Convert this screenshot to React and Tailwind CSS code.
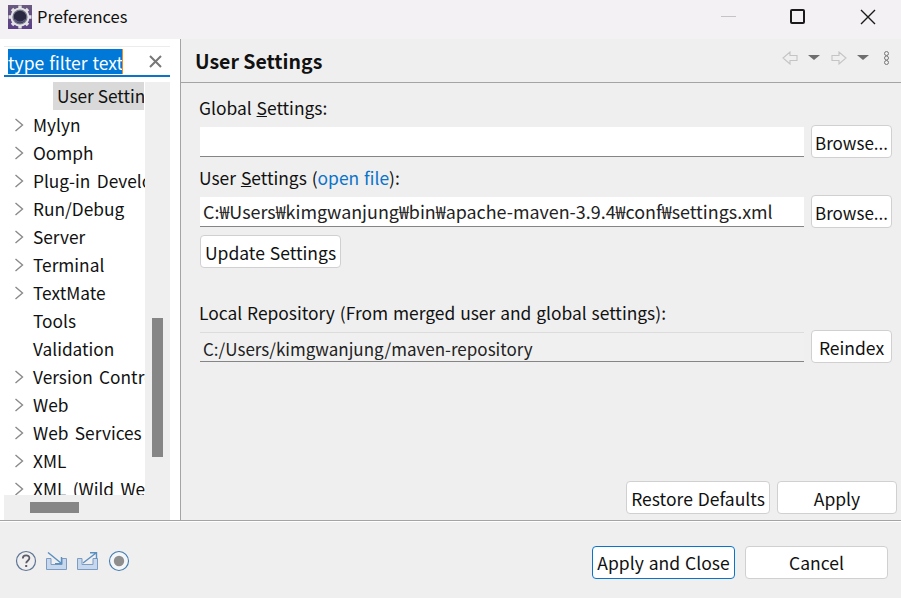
import React from 'react';

const font = { fontFamily: '"Noto Sans CJK KR", "Noto Sans", sans-serif' };

const treeItems = [
  { label: 'Mylyn', arrow: true },
  { label: 'Oomph', arrow: true },
  { label: 'Plug-in Development', arrow: true },
  { label: 'Run/Debug', arrow: true },
  { label: 'Server', arrow: true },
  { label: 'Terminal', arrow: true },
  { label: 'TextMate', arrow: true },
  { label: 'Tools', arrow: false },
  { label: 'Validation', arrow: false },
  { label: 'Version Control', arrow: true },
  { label: 'Web', arrow: true },
  { label: 'Web Services', arrow: true },
  { label: 'XML', arrow: true },
  { label: 'XML (Wild Web Developer)', arrow: true },
];

const Chevron = () => (
  <svg width="10" height="14" viewBox="0 0 10 14" className="shrink-0">
    <path d="M1.5 1 L8.5 7 L1.5 13" fill="none" stroke="#8a8a8a" strokeWidth="1.4" />
  </svg>
);

const Btn = ({ children, className = '' }) => (
  <button className={`h-[33px] shrink-0 bg-white border border-[#d0d0d0] rounded-[4px] text-[17.5px] [word-spacing:1px] leading-none text-[#111] whitespace-nowrap ${className}`}>
    {children}
  </button>
);

const Field = ({ value, disabled, className = '' }) => (
  <div className={`flex-1 h-[30px] mt-[2px] ml-[1px] flex items-center pl-[3px] border-b border-[#858585] whitespace-nowrap overflow-hidden text-[#222] ${disabled ? 'bg-[#f0f0f0] border-t border-t-[#dcdcdc]' : 'bg-white'} ${className}`}>
    {value}
  </div>
);

const AppIcon = () => (
  <svg width="24" height="24" viewBox="0 0 24 24">
    <defs>
      <linearGradient id="appBg" x1="0" y1="0" x2="0" y2="1">
        <stop offset="0" stopColor="#6a5a80" />
        <stop offset="1" stopColor="#5a3f86" />
      </linearGradient>
    </defs>
    <rect width="24" height="24" fill="url(#appBg)" />
    <circle cx="12" cy="12" r="9.5" fill="#e4e4e6" />
    <g stroke="#e4e4e6" strokeWidth="3.4">
      <path d="M12 0.5V23.5M0.5 12H23.5M4 4L20 20M20 4L4 20" />
    </g>
    <circle cx="12" cy="12" r="7.6" fill="#77778a" />
    <circle cx="12" cy="12" r="6.2" fill="#2a2840" />
    <path d="M7 14.5a6 6 0 0 0 10 0" fill="none" stroke="#5c5a88" strokeWidth="1.2" />
  </svg>
);

const HelpIcon = () => (
  <svg width="22" height="22" viewBox="0 0 22 22">
    <circle cx="11" cy="11" r="9.5" fill="none" stroke="#5f7596" strokeWidth="1.2" />
    <path d="M7.8 8.5c0-4.2 6.6-4.2 6.6-.4 0 2.6-3.2 2.6-3.2 5.2" fill="none" stroke="#5a5a6a" strokeWidth="1.8" />
    <rect x="10.2" y="15" width="2" height="2" fill="#5a5a6a" />
  </svg>
);

const TrayIcon = ({ out }) => (
  <svg width="21" height="18" viewBox="0 0 21 18">
    <path d="M0.5 6.5H5V12.5H16V6.5H20.5V17.5H0.5Z" fill="#c8d8ec" stroke="#7d9cc4" strokeWidth="1" />
    {out ? (
      <path d="M6 11L19 1M13 0.7H19.5V7" fill="none" stroke="#5a8fc2" strokeWidth="1.4" />
    ) : (
      <path d="M2 0.5L15.5 11.5M15.5 5V11.7H9" fill="none" stroke="#5a8fc2" strokeWidth="1.4" />
    )}
  </svg>
);

const RecordIcon = () => (
  <svg width="22" height="22" viewBox="0 0 22 22">
    <circle cx="11" cy="11" r="9.5" fill="#f4f6f8" stroke="#3f7ab0" strokeWidth="1.1" />
    <circle cx="11" cy="11" r="5.2" fill="#8e8e8e" />
  </svg>
);

const NavArrow = ({ right }) => (
  <svg width="16" height="14" viewBox="0 0 16 14" className={right ? '' : '-scale-x-100'}>
    <path d="M1 4.5H8V1L15 7L8 13V9.5H1Z" fill="none" stroke="#c4c4c4" strokeWidth="1.1" />
  </svg>
);

const Caret = () => <div className="w-0 h-0 border-x-[6px] border-x-transparent border-t-[5px] border-t-[#6e6e6e]" />;

export default function App() {
  return (
    <div className="w-[901px] h-[598px] flex flex-col bg-[#efefef] overflow-hidden text-[#111]" style={font}>
      {/* title bar */}
      <div className="h-[39px] shrink-0 flex items-center bg-[#f3f1f3] pl-[8px] pb-[6px]">
        <AppIcon />
        <span className="ml-[5px] text-[16.5px] text-[#111]">Preferences</span>
        <div className="ml-auto flex items-center">
          <div className="w-[15px] h-px bg-[#c4c4c4] mr-[54px]" />
          <div className="w-[15px] h-[15px] border-2 border-[#1a1a1a] rounded-[2px] mr-[55px]" />
          <svg width="16" height="16" viewBox="0 0 16 16" className="mr-[25px]">
            <path d="M1 1L15 15M15 1L1 15" stroke="#1a1a1a" strokeWidth="1.4" />
          </svg>
        </div>
      </div>

      <div className="flex h-[482px] shrink-0 border-b border-b-[#a4a4a4]">
        {/* left panel */}
        <div className="w-[180px] shrink-0 bg-white pl-[4px] pr-[10px] pt-[7px] flex flex-col">
          <div className="h-[31px] shrink-0 flex items-center border-t border-[#ececec] border-b-2 border-b-[#0a74c8]">
            <span className="ml-[4px] h-[25px] w-[115px] flex items-center pt-[4px] bg-[#0078d7] text-white text-[17.5px] [word-spacing:1px] leading-none whitespace-nowrap overflow-hidden border-r border-r-[#f08a24]">type filter text</span>
            <svg width="13" height="13" viewBox="0 0 13 13" className="ml-auto mr-[8px]">
              <path d="M1 1L12 12M12 1L1 12" stroke="#777" strokeWidth="2" />
            </svg>
          </div>
          <div className="flex h-[413px] shrink-0 mt-[5px]">
            <div className="w-[141px] shrink-0 flex flex-col overflow-hidden">
              <div className="h-[28px] shrink-0 ml-[49px] mr-px bg-[#d9d9d9] pl-[4px] flex items-center text-[17.3px] leading-none whitespace-nowrap overflow-hidden">User Settings</div>
              {treeItems.map((item) => (
                <div key={item.label} className="h-[28px] shrink-0 flex items-center pt-[2px] text-[17.3px] [word-spacing:2.5px] leading-none whitespace-nowrap">
                  <div className="w-[29px] pl-[10px] shrink-0 flex">{item.arrow && <Chevron />}</div>
                  <span>{item.label}</span>
                </div>
              ))}
            </div>
            <div className="w-[25px] bg-[#efefef] pl-[7px]">
              <div className="w-[11px] h-[139px] mt-[236px] bg-[#868686]" />
            </div>
          </div>
          <div className="h-[25px] bg-[#efefef] shrink-0 pt-[7px] pl-[26px]">
            <div className="w-[49px] h-[11px] bg-[#868686]" />
          </div>
        </div>

        {/* right panel */}
        <div className="flex-1 border-l border-l-[#a4a4a4] flex flex-col">
          <div className="h-[44px] shrink-0 border-b border-b-[#a4a4a4] flex items-center pl-[14px]">
            <span className="font-bold text-[19.5px] pt-[1px]">User Settings</span>
            <div className="ml-auto flex items-center mr-[12px] mt-[-6px]">
              <NavArrow />
              <div className="ml-[10px]"><Caret /></div>
              <div className="ml-[11px]"><NavArrow right /></div>
              <div className="ml-[10px]"><Caret /></div>
              <svg width="5" height="14" viewBox="0 0 5 14" className="ml-[15px]">
                <g fill="none" stroke="#777" strokeWidth="1">
                  <circle cx="2.5" cy="2.5" r="2" />
                  <circle cx="2.5" cy="7" r="2" />
                  <circle cx="2.5" cy="11.5" r="2" />
                </g>
              </svg>
            </div>
          </div>

          <div className="flex-1 flex flex-col pl-[18px] pr-[9px] pt-[13px] text-[17.4px] [word-spacing:1px] leading-none">
            <div className="h-[24px] flex items-center whitespace-pre">Global <u>S</u>ettings:</div>
            <div className="flex gap-[7px] items-start mt-[5px]">
              <Field value="" />
              <Btn className="w-[81px] !text-[17px] pt-[2px]">Browse...</Btn>
            </div>
            <div className="h-[24px] flex items-center mt-[8px] whitespace-pre">User <u>S</u>ettings (<span className="text-[#0b73c9]">open file</span>):</div>
            <div className="flex gap-[7px] items-start mt-[5px]">
              <Field className="text-[17.9px] [word-spacing:0px]" value="C:₩Users₩kimgwanjung₩bin₩apache-maven-3.9.4₩conf₩settings.xml" />
              <Btn className="w-[81px] !text-[17px] pt-[2px]">Browse...</Btn>
            </div>
            <Btn className="w-[141px] mt-[7px] ml-px pt-[2px]">Update Settings</Btn>
            <div className="h-[24px] flex items-center mt-[33px]">Local Repository (From merged user and global settings):</div>
            <div className="flex gap-[7px] items-start mt-[5px]">
              <Field disabled className="text-[17px] pt-[2px]" value="C:/Users/kimgwanjung/maven-repository" />
              <Btn className="w-[81px] pt-[2px]">Reindex</Btn>
            </div>
            <div className="mt-auto mb-[6px] -mr-[5px] flex justify-end gap-[7px]">
              <Btn className="w-[144px] pt-[2px]">Restore Defaults</Btn>
              <Btn className="w-[120px] pt-[2px]">Apply</Btn>
            </div>
          </div>
        </div>
      </div>

      {/* footer */}
      <div className="flex-1 border-t border-t-white flex items-center pl-[15px] pr-[13px] pb-[5px]">
        <div className="flex items-center mt-[6px]">
          <HelpIcon />
          <div className="ml-[9px]"><TrayIcon /></div>
          <div className="ml-[10px]"><TrayIcon out /></div>
          <div className="ml-[10px]"><RecordIcon /></div>
        </div>
        <div className="ml-auto flex gap-[10px] mt-[10px]">
          <Btn className="w-[143px] !border-[#0a74c8]">Apply and Close</Btn>
          <Btn className="w-[143px]">Cancel</Btn>
        </div>
      </div>
    </div>
  );
}
